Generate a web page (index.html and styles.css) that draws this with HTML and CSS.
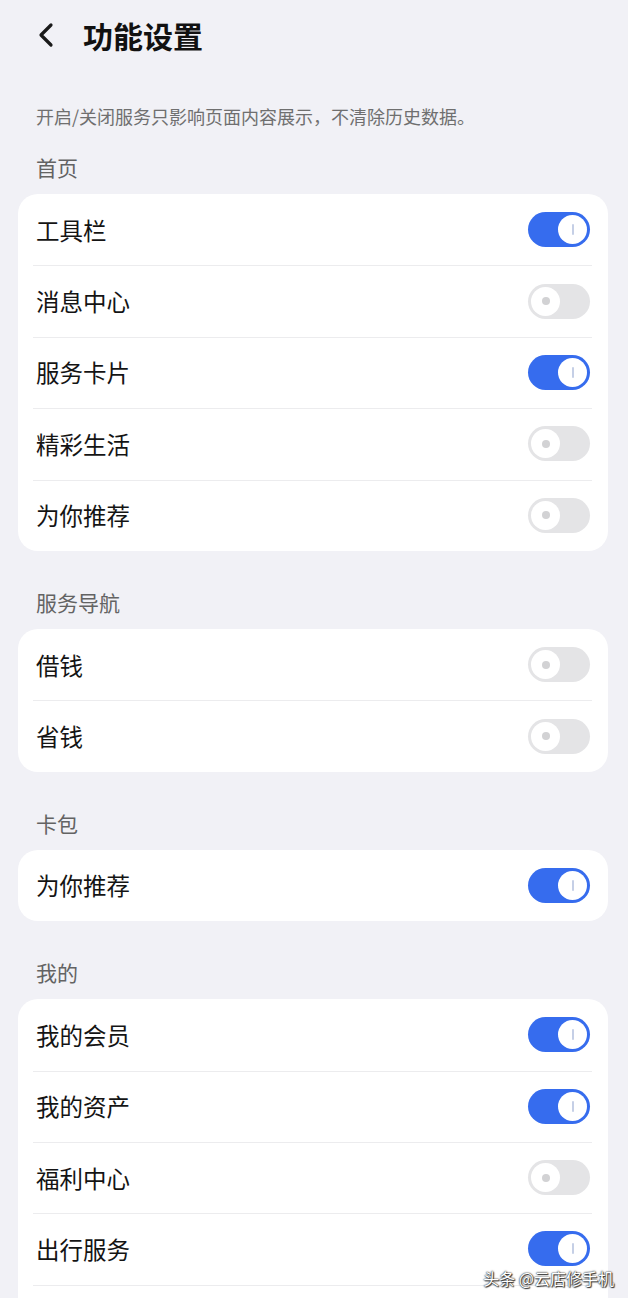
FILE: index.html
```html
<!DOCTYPE html>
<html lang="zh-CN">
<head>
<meta charset="utf-8">
<title>功能设置</title>
<link rel="stylesheet" href="styles.css">
</head>
<body>
<div class="page">
  <header class="header">
    <svg class="back" width="20" height="26" viewBox="0 0 20 26"><path d="M15 3 L5 13 L15 23" fill="none" stroke="#1a1a1a" stroke-width="3.2" stroke-linecap="round" stroke-linejoin="round"/></svg>
    <h1 class="title">功能设置</h1>
  </header>
  <p class="desc">开启/关闭服务只影响页面内容展示，不清除历史数据。</p>

  <section class="section first">
    <div class="label">首页</div>
    <div class="card">
      <div class="row"><span class="name">工具栏</span><span class="switch on"><span class="knob"></span></span></div>
      <div class="row"><span class="name">消息中心</span><span class="switch"><span class="knob"></span></span></div>
      <div class="row"><span class="name">服务卡片</span><span class="switch on"><span class="knob"></span></span></div>
      <div class="row"><span class="name">精彩生活</span><span class="switch"><span class="knob"></span></span></div>
      <div class="row"><span class="name">为你推荐</span><span class="switch"><span class="knob"></span></span></div>
    </div>
  </section>

  <section class="section">
    <div class="label">服务导航</div>
    <div class="card">
      <div class="row"><span class="name">借钱</span><span class="switch"><span class="knob"></span></span></div>
      <div class="row"><span class="name">省钱</span><span class="switch"><span class="knob"></span></span></div>
    </div>
  </section>

  <section class="section">
    <div class="label">卡包</div>
    <div class="card">
      <div class="row"><span class="name">为你推荐</span><span class="switch on"><span class="knob"></span></span></div>
    </div>
  </section>

  <section class="section">
    <div class="label">我的</div>
    <div class="card">
      <div class="row"><span class="name">我的会员</span><span class="switch on"><span class="knob"></span></span></div>
      <div class="row"><span class="name">我的资产</span><span class="switch on"><span class="knob"></span></span></div>
      <div class="row"><span class="name">福利中心</span><span class="switch"><span class="knob"></span></span></div>
      <div class="row"><span class="name">出行服务</span><span class="switch on"><span class="knob"></span></span></div>
      <div class="row"></div>
    </div>
  </section>
</div>
<div class="watermark">头条 @云店修手机</div>
</body>
</html>
```

FILE: styles.css
```css
* { box-sizing: border-box; }
html, body {
  margin: 0;
  padding: 0;
  background: #f1f1f6;
  height: 1298px;
  overflow: hidden;
}
body {
  font-family: "Noto Sans CJK SC", "Noto Sans", sans-serif;
  color: #141414;
  position: relative;
}
.page {
  display: flex;
  flex-direction: column;
}
.header {
  height: 70px;
  display: flex;
  align-items: center;
  padding-left: 36px;
}
.back {
  display: block;
  margin-right: 27px;
}
.title {
  margin: 0;
  font-size: 30px;
  font-weight: 700;
  line-height: 40px;
  color: #111;
}
.desc {
  margin: 34px 0 0 36px;
  font-size: 18px;
  line-height: 24px;
  color: #6f6f6f;
}
.section {
  display: flex;
  flex-direction: column;
  margin-top: 38px;
}
.section.first { margin-top: 26px; }
.label {
  margin-left: 36px;
  font-size: 21px;
  line-height: 26px;
  color: #636363;
}
.card {
  margin: 14px 20px 0 18px;
  background: #ffffff;
  border-radius: 20px;
  display: flex;
  flex-direction: column;
}
.row {
  height: 71.4px;
  display: flex;
  align-items: center;
  justify-content: space-between;
  padding: 0 18px 0 18px;
  position: relative;
}
.row + .row::before {
  content: "";
  position: absolute;
  top: 0;
  left: 15px;
  right: 16px;
  height: 1px;
  background: #ececee;
}
.name {
  font-size: 23.5px;
  line-height: 30px;
  color: #141414;
}
.switch {
  width: 62px;
  height: 35px;
  border-radius: 18px;
  background: #e4e4e6;
  display: flex;
  align-items: center;
  padding: 0 3px;
  justify-content: flex-start;
}
.switch.on {
  background: #366cee;
  justify-content: flex-end;
}
.knob {
  width: 29px;
  height: 29px;
  border-radius: 50%;
  background: #fff;
  display: flex;
  align-items: center;
  justify-content: center;
}
.knob::after {
  content: "";
  width: 8px;
  height: 8px;
  border-radius: 50%;
  background: #d2d2d4;
}
.switch.on .knob::after {
  width: 2px;
  height: 11px;
  border-radius: 1px;
  background: #c5cfe6;
}
.watermark {
  position: absolute;
  right: 14px;
  bottom: 10px;
  font-size: 16px;
  line-height: 20px;
  color: #fff;
  text-shadow: 0 0 2px #333, 0 0 1px #222, 1px 1px 1px #333;
}
```
